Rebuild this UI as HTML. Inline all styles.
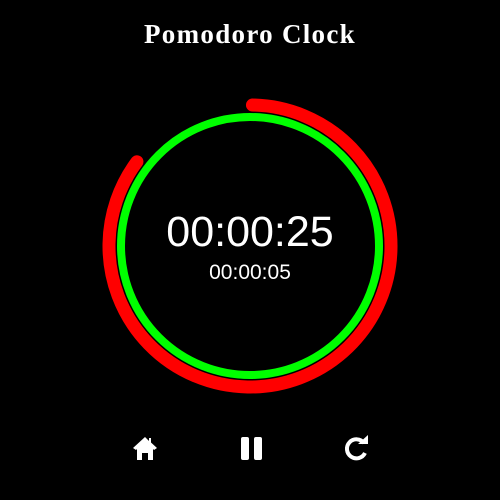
<!DOCTYPE html>
<html><head><style>
html,body{margin:0;padding:0;background:#000;width:500px;height:500px;overflow:hidden}
.t{position:absolute;left:0;width:500px;text-align:center;color:#fff;font-family:"Liberation Sans",sans-serif}
</style></head><body>
<div class="t" style="top:19px;font-family:'Liberation Serif',serif;font-weight:bold;font-size:27px;letter-spacing:1.3px">Pomodoro Clock</div>
<svg width="500" height="500" style="position:absolute;left:0;top:0">
<circle cx="250" cy="246" r="129" fill="none" stroke="#00ff00" stroke-width="8"/>
<circle cx="250" cy="246" r="141" fill="none" stroke="#ff0000" stroke-width="13" stroke-linecap="round"
 stroke-dasharray="752 1000" transform="rotate(-89 250 246)"/>
<path d="M145 437 L133 448 L136 450 L137 449 L137 460 L142 460 L142 453 L148 453 L148 460 L153 460 L153 449 L154 450 L157 448 L151 442.5 L151 438 L149 438 L149 441 Z" fill="#fff"/>
<rect x="241" y="437" width="8" height="23" rx="2" fill="#fff"/>
<rect x="254" y="437" width="8" height="23" rx="2" fill="#fff"/>
<path d="M364 443 A9.5 9.5 0 1 0 365 453" fill="none" stroke="#fff" stroke-width="4"/>
<path d="M358 444 L368 444 L368 435 Z" fill="#fff"/>
</svg>
<div class="t" style="top:208px;font-size:43px">00:00:25</div>
<div class="t" style="top:261px;font-size:21px">00:00:05</div>
</body></html>
